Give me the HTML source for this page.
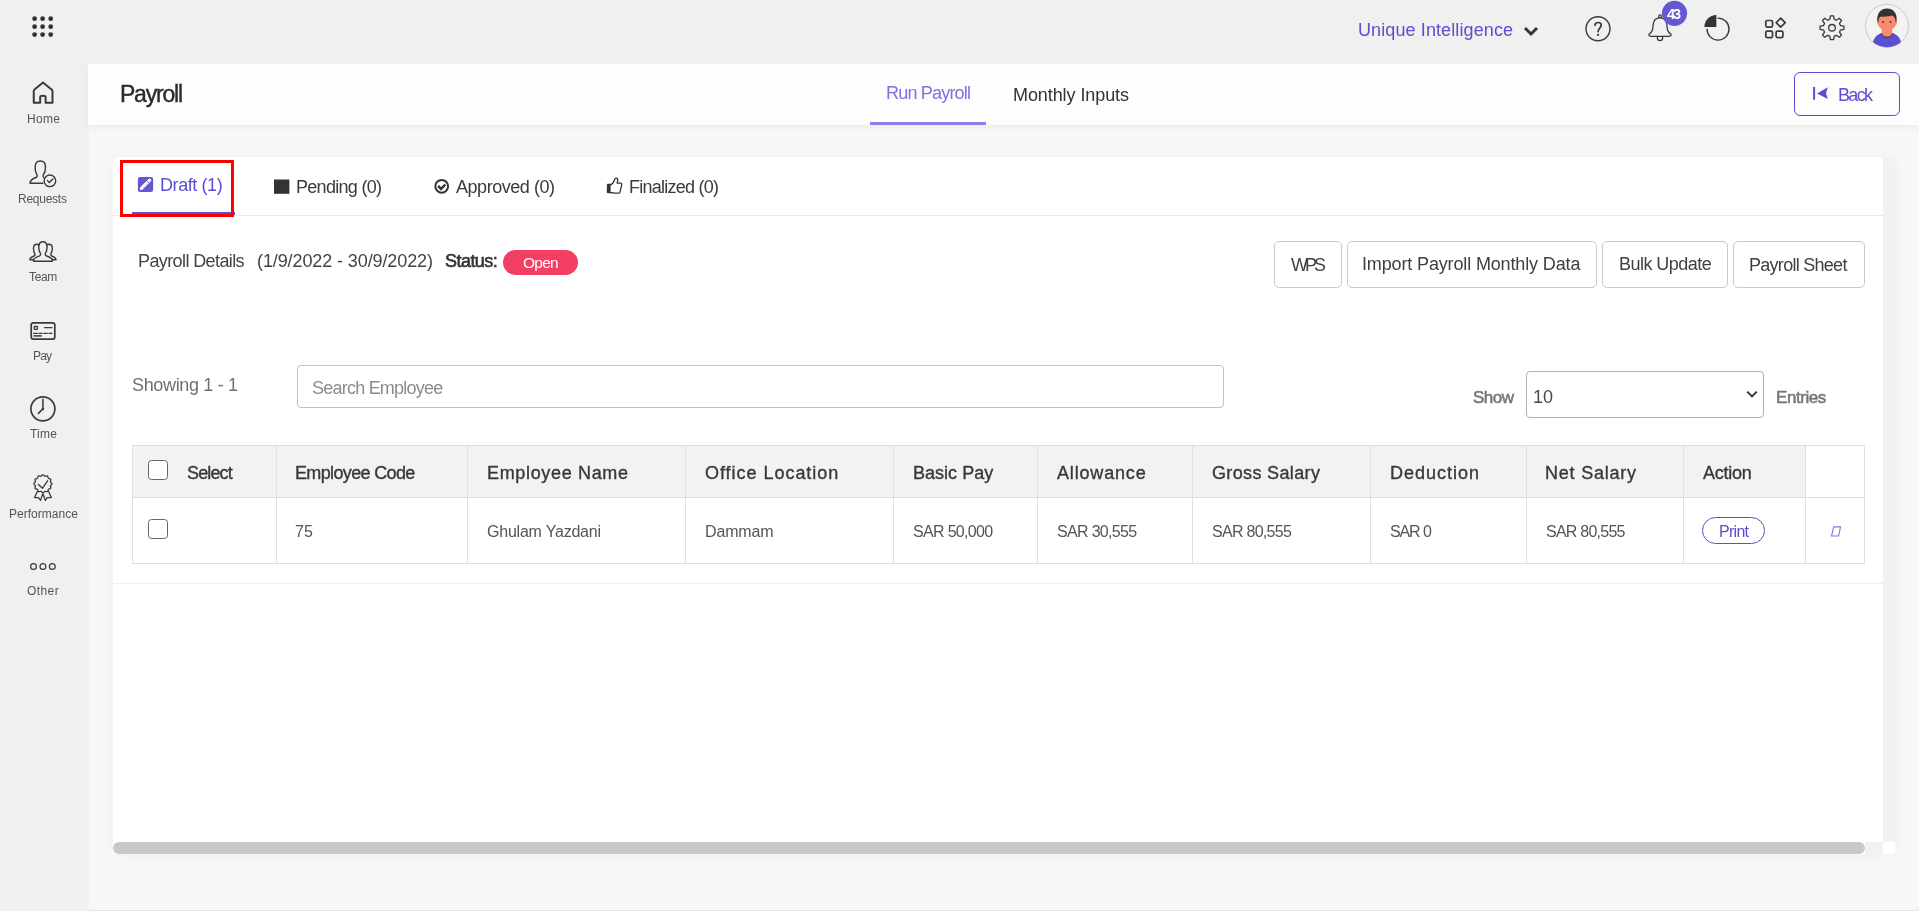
<!DOCTYPE html>
<html><head><meta charset="utf-8"><style>
html,body{margin:0;padding:0;width:1919px;height:911px;overflow:hidden;background:#f0f0f0;font-family:"Liberation Sans",sans-serif;}
.b{position:absolute;box-sizing:border-box;}
.t{position:absolute;z-index:2;will-change:transform;white-space:pre;font-family:"Liberation Sans",sans-serif;}
svg{position:absolute;overflow:visible;}
</style></head><body>
<div class="b" style="left:87px;top:64px;width:1832px;height:847px;background:#f8f8f9;border-bottom-left-radius:5px;border-bottom-right-radius:5px;border-bottom:1.5px solid #e3e3e3;border-left:2px solid #f1f2f4;"></div>
<div class="b" style="left:88px;top:64px;width:1831px;height:61px;background:#fdfdfd;box-shadow:0 3px 8px rgba(0,0,0,0.05);"></div>
<div class="b" style="left:113px;top:157px;width:1782px;height:697px;background:#fff;border-top-left-radius:6px;box-shadow:0 0 18px rgba(0,0,0,0.045);"></div>
<div class="b" style="left:1883px;top:157px;width:12px;height:685px;background:#f1f1f1;"></div>
<div class="b" style="left:1865px;top:842px;width:18px;height:12px;background:#f1f1f1;"></div>
<div class="b" style="left:1883px;top:842px;width:12px;height:12px;background:#fff;"></div>
<div class="b" style="left:113px;top:842px;width:1752px;height:12px;background:#c8c8c8;border-radius:6px;"></div>
<div class="b" style="left:113px;top:215px;width:1770px;height:1px;background:#e9ecef;"></div>
<div class="b" style="left:132px;top:212px;width:103px;height:2.5px;background:#5d52d3;"></div>
<div class="b" style="left:120px;top:160px;width:113.5px;height:56.5px;border:3px solid #ff0000;box-sizing:border-box;"></div>
<div class="b" style="left:870px;top:122px;width:116px;height:3px;background:#8a80e8;"></div>
<div class="b" style="left:1794px;top:72px;width:106px;height:44px;border:1.5px solid #5b4fd0;border-radius:6px;box-sizing:border-box;"></div>
<div class="b" style="left:503px;top:250px;width:75px;height:25px;background:#f43f64;border-radius:13px;"></div>
<div class="b" style="left:1274px;top:241px;width:68px;height:47px;border:1.3px solid #c9c9c9;border-radius:5px;box-sizing:border-box;background:#fff;"></div>
<div class="b" style="left:1347px;top:241px;width:250px;height:47px;border:1.3px solid #c9c9c9;border-radius:5px;box-sizing:border-box;background:#fff;"></div>
<div class="b" style="left:1602px;top:241px;width:126px;height:47px;border:1.3px solid #c9c9c9;border-radius:5px;box-sizing:border-box;background:#fff;"></div>
<div class="b" style="left:1733px;top:241px;width:132px;height:47px;border:1.3px solid #c9c9c9;border-radius:5px;box-sizing:border-box;background:#fff;"></div>
<div class="b" style="left:297px;top:365px;width:927px;height:43px;border:1px solid #b8c2d0;border-radius:4px;box-sizing:border-box;"></div>
<div class="b" style="left:1526px;top:371px;width:238px;height:47px;border:1px solid #aab4c2;border-radius:4px;box-sizing:border-box;"></div>
<div class="b" style="left:132px;top:445px;width:1673px;height:52px;background:#f1f2f4;"></div>
<div class="b" style="left:132px;top:445px;width:1733px;height:119px;border:1px solid #e0e0e0;box-sizing:border-box;"></div>
<div class="b" style="left:132px;top:497px;width:1733px;height:1px;background:#dedede;"></div>
<div class="b" style="left:276px;top:445px;width:1px;height:119px;background:#e0e0e0;"></div>
<div class="b" style="left:467px;top:445px;width:1px;height:119px;background:#e0e0e0;"></div>
<div class="b" style="left:685px;top:445px;width:1px;height:119px;background:#e0e0e0;"></div>
<div class="b" style="left:893px;top:445px;width:1px;height:119px;background:#e0e0e0;"></div>
<div class="b" style="left:1037px;top:445px;width:1px;height:119px;background:#e0e0e0;"></div>
<div class="b" style="left:1192px;top:445px;width:1px;height:119px;background:#e0e0e0;"></div>
<div class="b" style="left:1370px;top:445px;width:1px;height:119px;background:#e0e0e0;"></div>
<div class="b" style="left:1526px;top:445px;width:1px;height:119px;background:#e0e0e0;"></div>
<div class="b" style="left:1683px;top:445px;width:1px;height:119px;background:#e0e0e0;"></div>
<div class="b" style="left:1805px;top:445px;width:1px;height:119px;background:#e0e0e0;"></div>
<div class="b" style="left:113px;top:583px;width:1770px;height:1px;background:#eceef0;"></div>
<div class="b" style="left:148px;top:460px;width:20px;height:20px;border:1.4px solid #666;border-radius:3.5px;box-sizing:border-box;background:#fff;"></div>
<div class="b" style="left:148px;top:519px;width:20px;height:20px;border:1.4px solid #666;border-radius:3.5px;box-sizing:border-box;background:#fff;"></div>
<div class="b" style="left:1702px;top:517px;width:63px;height:27px;border:1.2px solid #5b4fd0;border-radius:14px;box-sizing:border-box;"></div>
<span class="t" style="left:1358.00px;top:21px;font-size:18px;line-height:18px;color:#5b4fd0;letter-spacing:0.106px;">Unique Intelligence</span>
<span class="t" style="left:1666.80px;top:7px;font-size:14.5px;line-height:14.5px;color:#fff;font-weight:bold;letter-spacing:-2.150px;">43</span>
<span class="t" style="left:26.50px;top:113px;font-size:12px;line-height:12px;color:#555;letter-spacing:0.300px;">Home</span>
<span class="t" style="left:18.40px;top:193px;font-size:12px;line-height:12px;color:#555;letter-spacing:-0.257px;">Requests</span>
<span class="t" style="left:29.00px;top:271px;font-size:12px;line-height:12px;color:#555;letter-spacing:-0.350px;">Team</span>
<span class="t" style="left:33.40px;top:350px;font-size:12px;line-height:12px;color:#555;letter-spacing:-0.800px;">Pay</span>
<span class="t" style="left:29.50px;top:428px;font-size:12px;line-height:12px;color:#555;letter-spacing:0.200px;">Time</span>
<span class="t" style="left:8.50px;top:508px;font-size:12px;line-height:12px;color:#555;letter-spacing:0.020px;">Performance</span>
<span class="t" style="left:27.00px;top:585px;font-size:12px;line-height:12px;color:#555;letter-spacing:0.425px;">Other</span>
<span class="t" style="left:120.30px;top:83px;font-size:23px;line-height:23px;color:#2b2b2b;-webkit-text-stroke:0.4px #2b2b2b;letter-spacing:-1.217px;">Payroll</span>
<span class="t" style="left:885.50px;top:84px;font-size:18px;line-height:18px;color:#7b72e0;letter-spacing:-0.805px;">Run Payroll</span>
<span class="t" style="left:1012.80px;top:86px;font-size:18px;line-height:18px;color:#333;letter-spacing:-0.081px;">Monthly Inputs</span>
<span class="t" style="left:1838.00px;top:86px;font-size:18px;line-height:18px;color:#5b4fd0;letter-spacing:-1.683px;">Back</span>
<span class="t" style="left:159.90px;top:176px;font-size:18px;line-height:18px;color:#5b4fd0;letter-spacing:-0.412px;">Draft (1)</span>
<span class="t" style="left:295.90px;top:178px;font-size:18px;line-height:18px;color:#3a3a3a;letter-spacing:-0.705px;">Pending (0)</span>
<span class="t" style="left:455.80px;top:177.5px;font-size:18px;line-height:18px;color:#3a3a3a;letter-spacing:-0.459px;">Approved (0)</span>
<span class="t" style="left:629.20px;top:177.5px;font-size:18px;line-height:18px;color:#3a3a3a;letter-spacing:-0.754px;">Finalized (0)</span>
<span class="t" style="left:138.40px;top:252px;font-size:18px;line-height:18px;color:#444;letter-spacing:-0.604px;">Payroll Details</span>
<span class="t" style="left:257.00px;top:252px;font-size:18px;line-height:18px;color:#444;letter-spacing:-0.102px;">(1/9/2022 - 30/9/2022)</span>
<span class="t" style="left:445.20px;top:252px;font-size:18px;line-height:18px;color:#333;-webkit-text-stroke:0.6px #333;letter-spacing:-0.542px;">Status:</span>
<span class="t" style="left:522.70px;top:255px;font-size:15.5px;line-height:15.5px;color:#fff;letter-spacing:-0.767px;">Open</span>
<span class="t" style="left:1290.70px;top:256px;font-size:18px;line-height:18px;color:#404040;letter-spacing:-3.000px;">WPS</span>
<span class="t" style="left:1362.30px;top:255px;font-size:18px;line-height:18px;color:#404040;letter-spacing:-0.142px;">Import Payroll Monthly Data</span>
<span class="t" style="left:1619.00px;top:255px;font-size:18px;line-height:18px;color:#404040;letter-spacing:-0.535px;">Bulk Update</span>
<span class="t" style="left:1749.30px;top:256px;font-size:18px;line-height:18px;color:#404040;letter-spacing:-0.721px;">Payroll Sheet</span>
<span class="t" style="left:131.60px;top:376px;font-size:18px;line-height:18px;color:#707070;letter-spacing:-0.337px;">Showing 1 - 1</span>
<span class="t" style="left:312.40px;top:379px;font-size:18px;line-height:18px;color:#8c8c8c;letter-spacing:-0.771px;">Search Employee</span>
<span class="t" style="left:1472.80px;top:389px;font-size:17px;line-height:17px;color:#777;-webkit-text-stroke:0.55px #777;letter-spacing:-0.467px;">Show</span>
<span class="t" style="left:1532.70px;top:387.5px;font-size:18px;line-height:18px;color:#4a4a4a;">10</span>
<span class="t" style="left:1776.20px;top:389px;font-size:17px;line-height:17px;color:#777;-webkit-text-stroke:0.55px #777;letter-spacing:-0.433px;">Entries</span>
<span class="t" style="left:186.60px;top:464px;font-size:18px;line-height:18px;color:#383838;-webkit-text-stroke:0.35px #383838;letter-spacing:-0.870px;">Select</span>
<span class="t" style="left:295.20px;top:464px;font-size:18px;line-height:18px;color:#383838;-webkit-text-stroke:0.35px #383838;letter-spacing:-0.642px;">Employee Code</span>
<span class="t" style="left:486.80px;top:464px;font-size:18px;line-height:18px;color:#383838;-webkit-text-stroke:0.35px #383838;letter-spacing:0.662px;">Employee Name</span>
<span class="t" style="left:704.80px;top:464px;font-size:18px;line-height:18px;color:#383838;-webkit-text-stroke:0.35px #383838;letter-spacing:0.968px;">Office Location</span>
<span class="t" style="left:913.00px;top:464px;font-size:18px;line-height:18px;color:#383838;-webkit-text-stroke:0.35px #383838;letter-spacing:0.019px;">Basic Pay</span>
<span class="t" style="left:1057.00px;top:464px;font-size:18px;line-height:18px;color:#383838;-webkit-text-stroke:0.35px #383838;letter-spacing:0.831px;">Allowance</span>
<span class="t" style="left:1212.00px;top:464px;font-size:18px;line-height:18px;color:#383838;-webkit-text-stroke:0.35px #383838;letter-spacing:0.350px;">Gross Salary</span>
<span class="t" style="left:1390.00px;top:464px;font-size:18px;line-height:18px;color:#383838;-webkit-text-stroke:0.35px #383838;letter-spacing:1.006px;">Deduction</span>
<span class="t" style="left:1545.40px;top:464px;font-size:18px;line-height:18px;color:#383838;-webkit-text-stroke:0.35px #383838;letter-spacing:0.783px;">Net Salary</span>
<span class="t" style="left:1702.80px;top:464px;font-size:18px;line-height:18px;color:#383838;-webkit-text-stroke:0.35px #383838;letter-spacing:-0.270px;">Action</span>
<span class="t" style="left:295.20px;top:523.5px;font-size:16px;line-height:16px;color:#555;">75</span>
<span class="t" style="left:486.80px;top:523.5px;font-size:16px;line-height:16px;color:#555;letter-spacing:-0.215px;">Ghulam Yazdani</span>
<span class="t" style="left:704.80px;top:523.5px;font-size:16px;line-height:16px;color:#555;letter-spacing:-0.150px;">Dammam</span>
<span class="t" style="left:913.00px;top:523.5px;font-size:16px;line-height:16px;color:#555;letter-spacing:-0.678px;">SAR 50,000</span>
<span class="t" style="left:1057.00px;top:523.5px;font-size:16px;line-height:16px;color:#555;letter-spacing:-0.678px;">SAR 30,555</span>
<span class="t" style="left:1212.00px;top:523.5px;font-size:16px;line-height:16px;color:#555;letter-spacing:-0.722px;">SAR 80,555</span>
<span class="t" style="left:1389.50px;top:523.5px;font-size:16px;line-height:16px;color:#555;letter-spacing:-1.113px;">SAR 0</span>
<span class="t" style="left:1545.50px;top:523.5px;font-size:16px;line-height:16px;color:#555;letter-spacing:-0.756px;">SAR 80,555</span>
<span class="t" style="left:1718.80px;top:523.5px;font-size:16px;line-height:16px;color:#5b4fd0;letter-spacing:-0.725px;">Print</span>
<svg style="left:26px;top:10px" width="34" height="34" viewBox="0 0 34 34"><circle cx="8.6" cy="8.7" r="2.4" fill="#333"/><circle cx="8.6" cy="16.7" r="2.4" fill="#333"/><circle cx="8.6" cy="24.6" r="2.4" fill="#333"/><circle cx="16.6" cy="8.7" r="2.4" fill="#333"/><circle cx="16.6" cy="16.7" r="2.4" fill="#333"/><circle cx="16.6" cy="24.6" r="2.4" fill="#333"/><circle cx="24.7" cy="8.7" r="2.4" fill="#333"/><circle cx="24.7" cy="16.7" r="2.4" fill="#333"/><circle cx="24.7" cy="24.6" r="2.4" fill="#333"/></svg>
<svg style="left:24px;top:70px" width="40" height="40" viewBox="0 0 40 40"><path d="M9.75 32.8 V21.2 Q9.75 20 10.8 19.2 L19 12.5 L27.2 19.2 Q28.5 20 28.5 21.2 V32.8 H21.6 V27 Q21.6 25.7 19 25.7 Q16.2 25.7 16.2 27 V32.8 Z" fill="none" stroke="#3a3a3a" stroke-linejoin="round" stroke-linecap="round" stroke-width="2"/></svg>
<svg style="left:24px;top:152px" width="40" height="40" viewBox="0 0 40 40"><path d="M18.9 31.3 H6 C6 28.5 8 27 12 25.5 C13.3 25 13.3 23.5 12.8 22.5 C11.5 20.5 11 18 11.2 15 C11.2 11 13 9 16.2 9 C19.5 9 21.5 11 21.5 15 C21.5 18 21 20.5 19.5 22.5 C18.8 23.5 18.8 24.5 19.6 25.6" fill="none" stroke="#3a3a3a" stroke-linejoin="round" stroke-linecap="round" stroke-width="1.4"/><circle cx="25.9" cy="28.8" r="5.8" fill="none" stroke="#3a3a3a" stroke-linejoin="round" stroke-linecap="round" stroke-width="1.4"/><path d="M23.3 28.4 L25.3 30.6 L28.9 26.9" fill="none" stroke="#3a3a3a" stroke-linejoin="round" stroke-linecap="round" stroke-width="1.4"/></svg>
<svg style="left:24px;top:232px" width="40" height="40" viewBox="0 0 40 40"><path d="M9.6 29.2 V27.6 C10 26 12.5 25 15.5 23.8 C16.8 23.2 16.8 22 16.2 21 C15 19 14.6 16.5 14.8 14 C15 11.2 16.6 9.7 18.9 9.7 C21.2 9.7 22.8 11.2 23 14 C23.2 16.5 22.8 19 21.6 21 C21 22 21 23.2 22.3 23.8 C25.3 25 28 26 28.3 27.6 V29.2 Z" fill="none" stroke="#3a3a3a" stroke-linejoin="round" stroke-linecap="round" stroke-width="1.4"/><path d="M9.6 27.8 H5.8 C5.8 26.5 7.5 25 10 24 C11 23.5 11.2 22.5 10.8 21.7 C9.8 20 9.4 18 9.5 16 C9.6 13.5 11 12.3 13 12.3 C13.8 12.3 14.5 12.6 15 13" fill="none" stroke="#3a3a3a" stroke-linejoin="round" stroke-linecap="round" stroke-width="1.4"/><path d="M28.2 27.8 H32 C32 26.5 30.3 25 27.8 24 C26.8 23.5 26.6 22.5 27 21.7 C28 20 28.4 18 28.3 16 C28.2 13.5 26.8 12.3 24.8 12.3 C24 12.3 23.3 12.6 22.8 13" fill="none" stroke="#3a3a3a" stroke-linejoin="round" stroke-linecap="round" stroke-width="1.4"/></svg>
<svg style="left:24px;top:312px" width="40" height="40" viewBox="0 0 40 40"><rect x="7.2" y="10.9" width="23.6" height="16.2" rx="2.2" fill="none" stroke="#3a3a3a" stroke-linejoin="round" stroke-linecap="round" stroke-width="1.7"/><rect x="10.2" y="14.5" width="3.2" height="2.8" rx="0.6" fill="none" stroke="#3a3a3a" stroke-linejoin="round" stroke-linecap="round" stroke-width="1.3"/><path d="M20.3 15.6 H28 M9.6 21.3 H13.4 M14.9 21.3 H18.3 M19.9 21.3 H23.3 M24.8 21.3 H28.1" fill="none" stroke="#3a3a3a" stroke-linejoin="round" stroke-linecap="round" stroke-width="1.2"/><path d="M9.4 23.9 H17.9" fill="none" stroke="#3a3a3a" stroke-width="1.5"/></svg>
<svg style="left:24px;top:390px" width="40" height="40" viewBox="0 0 40 40"><circle cx="18.9" cy="18.8" r="12" fill="none" stroke="#3a3a3a" stroke-linejoin="round" stroke-linecap="round" stroke-width="1.7"/><path d="M18.9 9.3 V18.9 L14.4 23.4" fill="none" stroke="#3a3a3a" stroke-linejoin="round" stroke-linecap="round" stroke-width="1.5"/><circle cx="18.9" cy="18.9" r="1.3" fill="#3a3a3a"/></svg>
<svg style="left:24px;top:468px" width="40" height="40" viewBox="0 0 40 40"><path d="M18.90 6.80 L19.13 6.83 L19.37 6.93 L19.59 7.07 L19.80 7.26 L20.00 7.47 L20.19 7.69 L20.37 7.89 L20.55 8.06 L20.73 8.19 L20.92 8.27 L21.12 8.29 L21.35 8.27 L21.59 8.21 L21.84 8.13 L22.11 8.04 L22.39 7.96 L22.67 7.90 L22.93 7.88 L23.18 7.92 L23.40 8.01 L23.59 8.15 L23.74 8.35 L23.86 8.59 L23.95 8.85 L24.01 9.14 L24.07 9.42 L24.13 9.68 L24.20 9.92 L24.29 10.12 L24.42 10.28 L24.58 10.41 L24.78 10.50 L25.02 10.57 L25.28 10.63 L25.56 10.69 L25.85 10.75 L26.11 10.84 L26.35 10.96 L26.55 11.11 L26.69 11.30 L26.78 11.52 L26.82 11.77 L26.80 12.03 L26.74 12.31 L26.66 12.59 L26.57 12.86 L26.49 13.11 L26.43 13.35 L26.41 13.58 L26.43 13.78 L26.51 13.97 L26.64 14.15 L26.81 14.33 L27.01 14.51 L27.23 14.70 L27.44 14.90 L27.63 15.11 L27.77 15.33 L27.87 15.57 L27.90 15.80 L27.87 16.03 L27.77 16.27 L27.63 16.49 L27.44 16.70 L27.23 16.90 L27.01 17.09 L26.81 17.27 L26.64 17.45 L26.51 17.63 L26.43 17.82 L26.41 18.02 L26.43 18.25 L26.49 18.49 L26.57 18.74 L26.66 19.01 L26.74 19.29 L26.80 19.57 L26.82 19.83 L26.78 20.08 L26.69 20.30 L26.55 20.49 L26.35 20.64 L26.11 20.76 L25.85 20.85 L25.56 20.91 L25.28 20.97 L25.02 21.03 L24.78 21.10 L24.58 21.19 L24.42 21.32 L24.29 21.48 L24.20 21.68 L24.13 21.92 L24.07 22.18 L24.01 22.46 L23.95 22.75 L23.86 23.01 L23.74 23.25 L23.59 23.45 L23.40 23.59 L23.18 23.68 L22.93 23.72 L22.67 23.70 L22.39 23.64 L22.11 23.56 L21.84 23.47 L21.59 23.39 L21.35 23.33 L21.12 23.31 L20.92 23.33 L20.73 23.41 L20.55 23.54 L20.37 23.71 L20.19 23.91 L20.00 24.13 L19.80 24.34 L19.59 24.53 L19.37 24.67 L19.13 24.77 L18.90 24.80 L18.67 24.77 L18.43 24.67 L18.21 24.53 L18.00 24.34 L17.80 24.13 L17.61 23.91 L17.43 23.71 L17.25 23.54 L17.07 23.41 L16.88 23.33 L16.68 23.31 L16.45 23.33 L16.21 23.39 L15.96 23.47 L15.69 23.56 L15.41 23.64 L15.13 23.70 L14.87 23.72 L14.62 23.68 L14.40 23.59 L14.21 23.45 L14.06 23.25 L13.94 23.01 L13.85 22.75 L13.79 22.46 L13.73 22.18 L13.67 21.92 L13.60 21.68 L13.51 21.48 L13.38 21.32 L13.22 21.19 L13.02 21.10 L12.78 21.03 L12.52 20.97 L12.24 20.91 L11.95 20.85 L11.69 20.76 L11.45 20.64 L11.25 20.49 L11.11 20.30 L11.02 20.08 L10.98 19.83 L11.00 19.57 L11.06 19.29 L11.14 19.01 L11.23 18.74 L11.31 18.49 L11.37 18.25 L11.39 18.02 L11.37 17.82 L11.29 17.63 L11.16 17.45 L10.99 17.27 L10.79 17.09 L10.57 16.90 L10.36 16.70 L10.17 16.49 L10.03 16.27 L9.93 16.03 L9.90 15.80 L9.93 15.57 L10.03 15.33 L10.17 15.11 L10.36 14.90 L10.57 14.70 L10.79 14.51 L10.99 14.33 L11.16 14.15 L11.29 13.97 L11.37 13.78 L11.39 13.58 L11.37 13.35 L11.31 13.11 L11.23 12.86 L11.14 12.59 L11.06 12.31 L11.00 12.03 L10.98 11.77 L11.02 11.52 L11.11 11.30 L11.25 11.11 L11.45 10.96 L11.69 10.84 L11.95 10.75 L12.24 10.69 L12.52 10.63 L12.78 10.57 L13.02 10.50 L13.22 10.41 L13.38 10.28 L13.51 10.12 L13.60 9.92 L13.67 9.68 L13.73 9.42 L13.79 9.14 L13.85 8.85 L13.94 8.59 L14.06 8.35 L14.21 8.15 L14.40 8.01 L14.62 7.92 L14.87 7.88 L15.13 7.90 L15.41 7.96 L15.69 8.04 L15.96 8.13 L16.21 8.21 L16.45 8.27 L16.68 8.29 L16.88 8.27 L17.07 8.19 L17.25 8.06 L17.43 7.89 L17.61 7.69 L17.80 7.47 L18.00 7.26 L18.21 7.07 L18.43 6.93 L18.67 6.83 L18.90 6.80Z" fill="none" stroke="#3a3a3a" stroke-linejoin="round" stroke-linecap="round" stroke-width="1.3"/><path d="M14.4 16.5 L18.4 20.3 L23.6 12.8" fill="none" stroke="#3a3a3a" stroke-linejoin="round" stroke-linecap="round" stroke-width="1.3"/><path d="M13.4 23.2 L10.6 29.6 L14.5 29.7 L16.5 32.4 L18.9 25.6 L21.3 32.4 L23.3 29.7 L27.3 29.6 L24.5 23.2" fill="none" stroke="#3a3a3a" stroke-linejoin="round" stroke-linecap="round" stroke-width="1.3"/></svg>
<svg style="left:24px;top:550px" width="40" height="30" viewBox="0 0 40 30"><circle cx="9.5" cy="16.5" r="2.9" fill="none" stroke="#3a3a3a" stroke-linejoin="round" stroke-linecap="round" stroke-width="1.25"/><circle cx="18.9" cy="16.5" r="2.9" fill="none" stroke="#3a3a3a" stroke-linejoin="round" stroke-linecap="round" stroke-width="1.25"/><circle cx="28.3" cy="16.5" r="2.9" fill="none" stroke="#3a3a3a" stroke-linejoin="round" stroke-linecap="round" stroke-width="1.25"/></svg>
<svg style="left:1520px;top:20px" width="22" height="20" viewBox="0 0 22 20"><path d="M5 8 L11 14 L17 8" fill="none" stroke="#333" stroke-width="2.9" stroke-linecap="butt" stroke-linejoin="miter"/></svg>
<svg style="left:1580px;top:10px" width="40" height="40" viewBox="0 0 40 40"><circle cx="18" cy="18.8" r="12" fill="none" stroke="#3a3a3a" stroke-linejoin="round" stroke-linecap="round" stroke-width="1.4" stroke="#333"/><path d="M15 15.3 C15 13.4 16.3 12.5 18.1 12.5 C20 12.5 21.3 13.6 21.3 15.3 C21.3 17.6 18.1 18.4 18.1 21.6" fill="none" stroke="#3a3a3a" stroke-linejoin="round" stroke-linecap="round" stroke-width="1.7"/><circle cx="18.1" cy="24.9" r="1.1" fill="#333"/></svg>
<svg style="left:1640px;top:8px" width="40" height="40" viewBox="0 0 40 40"><path d="M20 9.8 C16 9.8 13.6 12 13.2 16.5 C12.8 21.5 12.5 23.5 9.5 25.8 C8.2 27 8.8 28.3 11 28.3 H29 C31.2 28.3 31.8 27 30.5 25.8 C27.5 23.5 27.2 21.5 26.8 16.5 C26.4 12 24 9.8 20 9.8 Z" fill="none" stroke="#3a3a3a" stroke-linejoin="round" stroke-linecap="round" stroke-width="1.3"/><path d="M17.4 28.5 V30 C17.4 31.7 18.5 32.6 20 32.6 C21.5 32.6 22.6 31.7 22.6 30 V28.5" fill="none" stroke="#3a3a3a" stroke-linejoin="round" stroke-linecap="round" stroke-width="1.3"/><circle cx="20" cy="8.3" r="1.4" fill="none" stroke="#3a3a3a" stroke-linejoin="round" stroke-linecap="round" stroke-width="1.2"/></svg>
<svg style="left:1660px;top:0px" width="30" height="28" viewBox="0 0 30 28"><circle cx="14.5" cy="13.3" r="12.6" fill="#6558d3"/></svg>
<svg style="left:1698px;top:8px" width="40" height="40" viewBox="0 0 40 40"><path d="M20 10.1 A11 11 0 1 1 9 21.1" fill="none" stroke="#3a3a3a" stroke-linejoin="round" stroke-linecap="round" stroke-width="1.4" stroke-linecap="butt"/><path d="M18.4 19.1 V7.1 A12 12 0 0 0 6.4 19.1 Z" fill="#333"/></svg>
<svg style="left:1755px;top:8px" width="40" height="40" viewBox="0 0 40 40"><rect x="10.8" y="12.5" width="6.7" height="6.6" rx="1.3" fill="none" stroke="#3a3a3a" stroke-linejoin="round" stroke-linecap="round" stroke-width="1.7"/><rect x="10.8" y="23.1" width="6.7" height="6.5" rx="1.3" fill="none" stroke="#3a3a3a" stroke-linejoin="round" stroke-linecap="round" stroke-width="1.7"/><rect x="21.1" y="23.1" width="6.8" height="6.5" rx="1.3" fill="none" stroke="#3a3a3a" stroke-linejoin="round" stroke-linecap="round" stroke-width="1.7"/><path d="M25.7 10.2 L30.2 14.7 L25.7 19.2 L21.2 14.7 Z" fill="none" stroke="#3a3a3a" stroke-linejoin="round" stroke-linecap="round" stroke-width="1.7"/></svg>
<svg style="left:1812px;top:8px" width="40" height="40" viewBox="0 0 40 40"><path d="M17.75 11.40 L18.43 7.90 L21.57 7.90 L22.25 11.40 L24.35 12.27 L27.31 10.28 L29.52 12.49 L27.53 15.45 L28.40 17.55 L31.90 18.23 L31.90 21.37 L28.40 22.05 L27.53 24.15 L29.52 27.11 L27.31 29.32 L24.35 27.33 L22.25 28.20 L21.57 31.70 L18.43 31.70 L17.75 28.20 L15.65 27.33 L12.69 29.32 L10.48 27.11 L12.47 24.15 L11.60 22.05 L8.10 21.37 L8.10 18.23 L11.60 17.55 L12.47 15.45 L10.48 12.49 L12.69 10.28 L15.65 12.27Z" fill="none" stroke="#3a3a3a" stroke-linejoin="round" stroke-linecap="round" stroke-width="1.3"/><circle cx="20" cy="19.8" r="3.3" fill="none" stroke="#3a3a3a" stroke-linejoin="round" stroke-linecap="round" stroke-width="1.3"/></svg>
<svg style="left:1860px;top:0px" width="55" height="55" viewBox="0 0 55 55"><defs><clipPath id="avc"><circle cx="27" cy="25.8" r="21.4"/></clipPath></defs>
<circle cx="27" cy="25.8" r="21.5" fill="#f3f3f3" stroke="#c9c9c9" stroke-width="1"/>
<g clip-path="url(#avc)">
<path d="M13 42 C14 37 18 34 21.5 33 L32.5 33 C36 34 40 37 41 42 L41 48 L13 48 Z" fill="#5b4fd0"/>
<path d="M21.7 26 V34.5 C23 36.5 24.5 37 27 37 C29.5 37 31 36.5 32.2 34.5 V26 Z" fill="#fa8a6b"/>
<path d="M21.5 33.5 C23 36.3 25 37.2 27 37.2 C29 37.2 31 36.3 32.5 33.5" fill="none" stroke="#333" stroke-width="1"/>
<ellipse cx="18.6" cy="23.2" rx="1.4" ry="1.8" fill="#fa8a6b"/><ellipse cx="35.6" cy="23.2" rx="1.4" ry="1.8" fill="#fa8a6b"/>
<path d="M18.3 17 C18.3 12 22 10.5 27 10.5 C32 10.5 35.7 12 35.7 17 V24 C35.7 27.5 32.5 30 27 30 C21.5 30 18.3 27.5 18.3 24 Z" fill="#fa8a6b"/>
<path d="M17.3 21.8 C16.5 14 20 8.6 27 8.5 C33 8.5 37.5 12.5 36.6 21.8 L35.5 22 C35.5 18.5 34.5 16.5 32 15.5 C29 16.5 24 17 20.5 16.5 C19 17.5 18.5 19.5 18.6 22 Z" fill="#333"/>
<circle cx="23.1" cy="22" r="0.9" fill="#333"/><circle cx="30.5" cy="22" r="0.9" fill="#333"/>
</g></svg>
<svg style="left:1806px;top:80px" width="30" height="26" viewBox="0 0 30 26"><rect x="7.1" y="6.9" width="2" height="12.8" fill="#5b4fd0"/><path d="M11.1 13.4 L21.8 7.3 L20 13.4 L21.8 19 Z" fill="#5b4fd0"/></svg>
<svg style="left:132px;top:170px" width="30" height="30" viewBox="0 0 30 30"><rect x="5.9" y="6.9" width="15.2" height="15" rx="2.2" fill="#6257d1"/><path d="M9.4 18.4 L17.7 10.1" stroke="#fff" stroke-width="3.2" stroke-linecap="round"/><path d="M14.9 10.9 L17.0 13.0" stroke="#6257d1" stroke-width="0.8"/><path d="M8 20 L8 17.1 L10.9 20 Z" fill="#fff"/><path d="M11 17.5 L15 13.5" stroke="#b9b3ee" stroke-width="0.6"/></svg>
<svg style="left:274px;top:179px" width="16" height="15" viewBox="0 0 16 15"><rect x="0" y="0.5" width="15.4" height="14.3" fill="#333"/></svg>
<svg style="left:428px;top:170px" width="30" height="30" viewBox="0 0 30 30"><circle cx="13.7" cy="16.3" r="6.4" fill="none" stroke="#333" stroke-width="2"/><path d="M10.1 16 L13.1 18.9 L17.3 14.5" fill="none" stroke="#333" stroke-width="2.5" stroke-linecap="butt" stroke-linejoin="miter"/></svg>
<svg style="left:600px;top:170px" width="30" height="30" viewBox="0 0 30 30"><rect x="7.4" y="14.6" width="3.2" height="8" fill="#333"/><path d="M7.6 14.5 H11.4 C12.5 13.5 14 12 14.5 10 C14.8 8.8 15.2 8.2 16 8.2 C17 8.2 17.8 8.9 17.8 10 C17.8 11 17.3 12.2 17.1 13.2 H20.7 C21.5 13.2 21.9 14 21.7 14.8 L20 22.2 C19.8 22.9 19.4 23.2 18.8 23.2 H13.5 L12.2 22.6 H8 C7.6 22.6 7.4 22.3 7.4 22 Z" fill="none" stroke="#333" stroke-width="1.3" stroke-linejoin="round"/></svg>
<svg style="left:1736px;top:380px" width="30" height="30" viewBox="0 0 30 30"><path d="M11.2 11.6 L16 16.4 L20.8 11.6" fill="none" stroke="#333" stroke-width="1.9"/></svg>
<svg style="left:1820px;top:516px" width="30" height="30" viewBox="0 0 30 30"><path d="M13.7 10.9 H20.5 L18.6 20 H11.5 Z" fill="none" stroke="#7d74ea" stroke-width="1.1"/></svg>
</body></html>
